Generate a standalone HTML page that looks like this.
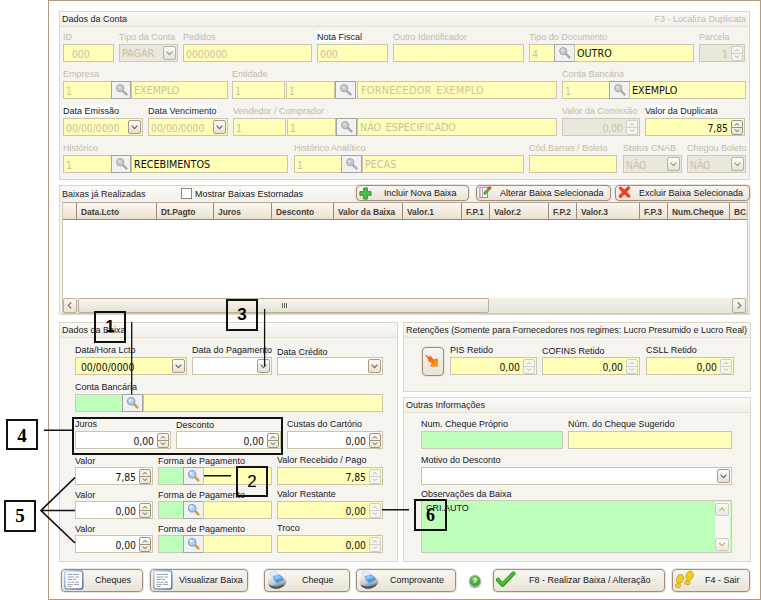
<!DOCTYPE html><html><head><meta charset="utf-8"><title>Baixa</title><style>
html,body{margin:0;padding:0}
body{width:761px;height:600px;position:relative;background:#fff;overflow:hidden;font:9px "Liberation Sans",sans-serif;color:#111}
div,span{position:absolute;box-sizing:border-box;white-space:nowrap}
.win{left:48px;top:0;width:713px;height:600px;border:1px solid #b49b80}
.gb{border:1px solid #ddd7c8;background:#f5f4ef}
.gt{left:0;top:0;right:0;height:15px;background:linear-gradient(#fbfaf8,#f1efe8);border-bottom:1px solid #e6e1d4}
.gt span{left:2px;top:2px;font-size:9px;color:#1a1a2a}
.l{font-size:9px;line-height:10px;color:#15151f}
.d{color:#c3bbab}
.hl{background:#fff;padding-top:1px;margin-top:-1px}
.in.x .cb{border-color:#b9b1a3}
.in{height:18px;border:1px solid #cdc4ad;background:#ffffb8;font:10.3px "DejaVu Sans Condensed","Liberation Sans",sans-serif;line-height:16px;color:#111;padding:1px 3px 0 2px;overflow:hidden}
.in.t{font-size:10.7px;word-spacing:1.5px}
.in.g{background:#bdffba;border-color:#d0c8b8}
.in.w{background:#fff}
.in.x{background:#ebe7dd;border-color:#cfc8b8}
.in.dt{color:#c9c1a6}
.in.r{text-align:right}
.sb{height:18px;border:1px solid #a5a5a5;background:#f1f1f1}
.sp{width:12px;height:15px;top:1px;right:1px;border:1px solid #a39482;background:linear-gradient(#f9f7f2,#ebe6da);border-radius:2px}
.sp.o{border-color:#d3cec3;background:#f6f5f1}
.cb{width:13px;height:14px;top:1px;right:1px;border:1px solid #a89a86;background:linear-gradient(#fdfcfa,#e6e0d2);border-radius:2px}
.btn{border:1px solid #a08d7c;border-radius:4px;background:linear-gradient(#f8f6f1,#e9e4d7);box-shadow:0 0 0 1px #e9e5dc}
.btn .t{font-size:9px;color:#15151f;line-height:10px}
.call{border:2px solid #111;text-align:center;font-weight:bold;color:#000}
.ln{background:#111}
.h{top:0;height:16px;border-right:1px solid #a08878;font:bold 8.4px "Liberation Sans",sans-serif;color:#443d33;line-height:18px;padding-left:4px}
</style></head><body>
<div class="win"></div>
<div class="gb" style="left:59px;top:11px;width:691px;height:169px"><div class="gt"><span>Dados da Conta</span><span style="left:auto;right:3px;color:#c3bbab">F3 - Localiza Duplicata</span></div></div>
<span class="l d" style="left:63px;top:32px">ID</span>
<div class="in dt" style="left:63px;top:44px;width:51px;height:18px">&nbsp;&nbsp;000</div>
<span class="l d" style="left:119px;top:32px">Tipo da Conta</span>
<div class="in x dt t" style="left:119px;top:44px;width:59px">PAGAR<div class="cb"><svg width="11" height="12" viewBox="0 0 11 12" style="position:absolute;left:0;top:0"><path d="M2.6 4.6 L5.5 7.6 L8.4 4.6" fill="none" stroke="#9a9184" stroke-width="1.1"/></svg></div></div>
<span class="l d" style="left:183px;top:32px">Pedidos</span>
<div class="in dt" style="left:183px;top:44px;width:129px;height:18px">0000000</div>
<span class="l hl" style="left:317px;top:32px">Nota Fiscal</span>
<div class="in dt" style="left:317px;top:44px;width:71px;height:18px">000</div>
<span class="l d" style="left:393px;top:32px">Outro Identificador</span>
<div class="in " style="left:393px;top:44px;width:131px;height:18px"></div>
<span class="l d" style="left:529px;top:32px">Tipo do Documento</span>
<div class="in dt" style="left:529px;top:44px;width:26px;height:18px">4</div>
<div class="sb" style="left:554px;top:44px;width:21px"><svg width="14" height="14" viewBox="0 0 14 14" style="position:absolute;left:3px;top:1px"><line x1="7.5" y1="7.5" x2="11.5" y2="11.5" stroke="#a9a9a9" stroke-width="2.4" stroke-linecap="round"/><circle cx="5.2" cy="5.2" r="3.6" fill="#c9c9c9" stroke="#a4a4a4" stroke-width="1"/><circle cx="4.3" cy="4.2" r="1.4" fill="#dedede"/></svg></div>
<div class="in  t" style="left:574px;top:44px;width:120px;height:18px">OUTRO</div>
<span class="l d" style="left:699px;top:32px">Parcela</span>
<div class="in r x dt" style="left:699px;top:44px;width:46px;padding-right:16px">1<div class="sp o"><svg width="10" height="13" viewBox="0 0 10 13" style="position:absolute;left:0;top:0"><path d="M3 4.4 L5 2.4 L7 4.4 M3 8.6 L5 10.6 L7 8.6" fill="none" stroke="#b5ad9f" stroke-width="1"/><line x1="0" y1="6.5" x2="10" y2="6.5" stroke="#d3cec3" stroke-width="1"/></svg></div></div>
<span class="l d" style="left:63px;top:69px">Empresa</span>
<div class="in dt" style="left:63px;top:81px;width:49px;height:18px">1</div>
<div class="sb" style="left:111px;top:81px;width:20px"><svg width="14" height="14" viewBox="0 0 14 14" style="position:absolute;left:3px;top:1px"><line x1="7.5" y1="7.5" x2="11.5" y2="11.5" stroke="#a9a9a9" stroke-width="2.4" stroke-linecap="round"/><circle cx="5.2" cy="5.2" r="3.6" fill="#c9c9c9" stroke="#a4a4a4" stroke-width="1"/><circle cx="4.3" cy="4.2" r="1.4" fill="#dedede"/></svg></div>
<div class="in dt t" style="left:131px;top:81px;width:97px;height:18px">EXEMPLO</div>
<span class="l d" style="left:232px;top:69px">Entidade</span>
<div class="in dt" style="left:232px;top:81px;width:53px;height:18px">1</div>
<div class="in dt" style="left:286px;top:81px;width:49px;height:18px">1</div>
<div class="sb" style="left:335px;top:81px;width:21px"><svg width="14" height="14" viewBox="0 0 14 14" style="position:absolute;left:3px;top:1px"><line x1="7.5" y1="7.5" x2="11.5" y2="11.5" stroke="#a9a9a9" stroke-width="2.4" stroke-linecap="round"/><circle cx="5.2" cy="5.2" r="3.6" fill="#c9c9c9" stroke="#a4a4a4" stroke-width="1"/><circle cx="4.3" cy="4.2" r="1.4" fill="#dedede"/></svg></div>
<div class="in dt t" style="left:357px;top:81px;width:200px;height:18px"><i style="font-style:normal;letter-spacing:.3px;padding-left:1px">FORNECEDOR EXEMPLO</i></div>
<span class="l d" style="left:562px;top:69px">Conta Bancária</span>
<div class="in dt" style="left:562px;top:81px;width:48px;height:18px">1</div>
<div class="sb" style="left:609px;top:81px;width:21px"><svg width="14" height="14" viewBox="0 0 14 14" style="position:absolute;left:3px;top:1px"><line x1="7.5" y1="7.5" x2="11.5" y2="11.5" stroke="#a9a9a9" stroke-width="2.4" stroke-linecap="round"/><circle cx="5.2" cy="5.2" r="3.6" fill="#c9c9c9" stroke="#a4a4a4" stroke-width="1"/><circle cx="4.3" cy="4.2" r="1.4" fill="#dedede"/></svg></div>
<div class="in  t" style="left:629px;top:81px;width:117px;height:18px">EXEMPLO</div>
<span class="l hl" style="left:63px;top:106px">Data Emissão</span>
<div class="in dt" style="left:63px;top:118px;width:80px">00/00/0000<div class="cb"><svg width="11" height="12" viewBox="0 0 11 12" style="position:absolute;left:0;top:0"><path d="M2.6 4.6 L5.5 7.6 L8.4 4.6" fill="none" stroke="#6b6256" stroke-width="1.1"/></svg></div></div>
<span class="l hl" style="left:148px;top:106px">Data Vencimento</span>
<div class="in dt" style="left:148px;top:118px;width:80px">00/00/0000<div class="cb"><svg width="11" height="12" viewBox="0 0 11 12" style="position:absolute;left:0;top:0"><path d="M2.6 4.6 L5.5 7.6 L8.4 4.6" fill="none" stroke="#6b6256" stroke-width="1.1"/></svg></div></div>
<span class="l d" style="left:233px;top:106px">Vendedor / Comprador</span>
<div class="in dt" style="left:233px;top:118px;width:53px;height:18px">1</div>
<div class="in dt" style="left:287px;top:118px;width:49px;height:18px">1</div>
<div class="sb" style="left:336px;top:118px;width:21px"><svg width="14" height="14" viewBox="0 0 14 14" style="position:absolute;left:3px;top:1px"><line x1="7.5" y1="7.5" x2="11.5" y2="11.5" stroke="#a9a9a9" stroke-width="2.4" stroke-linecap="round"/><circle cx="5.2" cy="5.2" r="3.6" fill="#c9c9c9" stroke="#a4a4a4" stroke-width="1"/><circle cx="4.3" cy="4.2" r="1.4" fill="#dedede"/></svg></div>
<div class="in dt t" style="left:357px;top:118px;width:200px;height:18px">NÃO ESPECIFICADO</div>
<span class="l d" style="left:562px;top:106px">Valor da Comissão</span>
<div class="in r x dt" style="left:562px;top:118px;width:78px;padding-right:16px">0,00<div class="sp o"><svg width="10" height="13" viewBox="0 0 10 13" style="position:absolute;left:0;top:0"><path d="M3 4.4 L5 2.4 L7 4.4 M3 8.6 L5 10.6 L7 8.6" fill="none" stroke="#b5ad9f" stroke-width="1"/><line x1="0" y1="6.5" x2="10" y2="6.5" stroke="#d3cec3" stroke-width="1"/></svg></div></div>
<span class="l hl" style="left:645px;top:106px">Valor da Duplicata</span>
<div class="in r " style="left:645px;top:118px;width:100px;padding-right:16px">7,85<div class="sp"><svg width="10" height="13" viewBox="0 0 10 13" style="position:absolute;left:0;top:0"><path d="M3 4.4 L5 2.4 L7 4.4 M3 8.6 L5 10.6 L7 8.6" fill="none" stroke="#5e5449" stroke-width="1"/><line x1="0" y1="6.5" x2="10" y2="6.5" stroke="#a39482" stroke-width="1"/></svg></div></div>
<span class="l d" style="left:63px;top:143px">Histórico</span>
<div class="in dt" style="left:63px;top:155px;width:49px;height:18px">1</div>
<div class="sb" style="left:111px;top:155px;width:20px"><svg width="14" height="14" viewBox="0 0 14 14" style="position:absolute;left:3px;top:1px"><line x1="7.5" y1="7.5" x2="11.5" y2="11.5" stroke="#a9a9a9" stroke-width="2.4" stroke-linecap="round"/><circle cx="5.2" cy="5.2" r="3.6" fill="#c9c9c9" stroke="#a4a4a4" stroke-width="1"/><circle cx="4.3" cy="4.2" r="1.4" fill="#dedede"/></svg></div>
<div class="in  t" style="left:131px;top:155px;width:157px;height:18px">RECEBIMENTOS</div>
<span class="l d" style="left:294px;top:143px">Histórico Analítico</span>
<div class="in dt" style="left:294px;top:155px;width:48px;height:18px">1</div>
<div class="sb" style="left:341px;top:155px;width:21px"><svg width="14" height="14" viewBox="0 0 14 14" style="position:absolute;left:3px;top:1px"><line x1="7.5" y1="7.5" x2="11.5" y2="11.5" stroke="#a9a9a9" stroke-width="2.4" stroke-linecap="round"/><circle cx="5.2" cy="5.2" r="3.6" fill="#c9c9c9" stroke="#a4a4a4" stroke-width="1"/><circle cx="4.3" cy="4.2" r="1.4" fill="#dedede"/></svg></div>
<div class="in dt t" style="left:362px;top:155px;width:162px;height:18px">PECAS</div>
<span class="l d" style="left:529px;top:143px">Cód.Barras / Boleto</span>
<div class="in " style="left:529px;top:155px;width:88px;height:18px"></div>
<span class="l d" style="left:623px;top:143px">Status CNAB</span>
<div class="in x dt" style="left:623px;top:155px;width:59px">NÃO<div class="cb"><svg width="11" height="12" viewBox="0 0 11 12" style="position:absolute;left:0;top:0"><path d="M2.6 4.6 L5.5 7.6 L8.4 4.6" fill="none" stroke="#9a9184" stroke-width="1.1"/></svg></div></div>
<span class="l d" style="left:687px;top:143px">Chegou Boleto</span>
<div class="in x dt" style="left:687px;top:155px;width:59px">NÃO<div class="cb"><svg width="11" height="12" viewBox="0 0 11 12" style="position:absolute;left:0;top:0"><path d="M2.6 4.6 L5.5 7.6 L8.4 4.6" fill="none" stroke="#9a9184" stroke-width="1.1"/></svg></div></div>
<div class="gb" style="left:59px;top:185px;width:691px;height:130px"><div class="gt" style="height:17px;border-bottom:none"><span style="top:3px">Baixas já Realizadas</span></div></div>
<div style="left:181px;top:188px;width:11px;height:11px;border:1px solid #8f8778;background:#fff"></div>
<span class="l " style="left:195px;top:189px">Mostrar Baixas Estornadas</span>
<div class="btn" style="left:356px;top:185px;width:113px;height:16px"><svg width="13" height="13" viewBox="0 0 14 14" style="position:absolute;left:2px;top:.5px"><path d="M5 1h4v4h4v4h-4v4h-4v-4h-4v-4h4z" fill="#4cc24a" stroke="#2a8a2a" stroke-width="1"/></svg><span class="t" style="left:27px;top:2px">Incluir Nova Baixa</span></div>
<div class="btn" style="left:476px;top:185px;width:135px;height:16px"><svg width="16" height="14" viewBox="477 186 16 14" style="position:absolute;left:0;top:0"><rect x="479.9" y="187.3" width="7.6" height="10.2" fill="#eef3ff" stroke="#8a8cc4" stroke-width="1"/><line x1="482.5" y1="187.8" x2="482.5" y2="197" stroke="#f08a78" stroke-width=".8"/><line x1="484.8" y1="193.2" x2="488.2" y2="189.8" stroke="#3db52e" stroke-width="3" stroke-linecap="round"/><circle cx="489.6" cy="188" r="1.8" fill="#e8432a"/></svg><span class="t" style="left:23px;top:2px">Alterar Baixa Selecionada</span></div>
<div class="btn" style="left:615px;top:185px;width:135px;height:16px"><svg width="16" height="14" viewBox="616 186 16 14" style="position:absolute;left:0;top:0"><path d="M620.6 188.2 L628.6 196 M628.4 188 L620.4 196.2" fill="none" stroke="#ee4322" stroke-width="3.4" stroke-linecap="round"/></svg><span class="t" style="left:23px;top:2px">Excluir Baixa Selecionada</span></div>
<div style="left:62px;top:202px;width:686px;height:112px;border:1px solid #cfc7b6;border-top-color:#b5a594;background:#fff;overflow:hidden">
<div style="left:0;top:0;width:684px;height:17px;background:linear-gradient(#faf7f1,#e9e0d0);border-bottom:1px solid #a08878"></div>
<div class="h" style="left:0px;width:14px"></div>
<div class="h" style="left:14px;width:80px">Data.Lcto</div>
<div class="h" style="left:94px;width:57px">Dt.Pagto</div>
<div class="h" style="left:151px;width:58px">Juros</div>
<div class="h" style="left:209px;width:62px">Desconto</div>
<div class="h" style="left:271px;width:69px">Valor da Baixa</div>
<div class="h" style="left:340px;width:59px">Valor.1</div>
<div class="h" style="left:399px;width:28px">F.P.1</div>
<div class="h" style="left:427px;width:59px">Valor.2</div>
<div class="h" style="left:486px;width:28px">F.P.2</div>
<div class="h" style="left:514px;width:63px">Valor.3</div>
<div class="h" style="left:577px;width:28px">F.P.3</div>
<div class="h" style="left:605px;width:62px">Num.Cheque</div>
<div class="h" style="left:667px;width:31px">BC.</div>
<div style="left:0;top:95px;width:684px;height:15px;background:linear-gradient(#f3f0ea,#e9e5dc)"></div>
<div style="left:0;top:95px;width:14px;height:15px;border:1px solid #b9ad9c;border-radius:2px;background:linear-gradient(#faf8f4,#e8e2d6)"><svg width="12" height="13" style="position:absolute;left:0;top:0"><path d="M7.2 3.5 L4.2 6.5 L7.2 9.5" fill="none" stroke="#7d7264" stroke-width="1.1"/></svg></div>
<div style="left:669px;top:95px;width:14px;height:15px;border:1px solid #b9ad9c;border-radius:2px;background:linear-gradient(#faf8f4,#e8e2d6)"><svg width="12" height="13" style="position:absolute;left:0;top:0"><path d="M4.8 3.5 L7.8 6.5 L4.8 9.5" fill="none" stroke="#7d7264" stroke-width="1.1"/></svg></div>
<div style="left:15px;top:95px;width:411px;height:15px;border:1px solid #b9ad9c;border-radius:2px;background:linear-gradient(#f9f7f2,#e6e0d3)"><div style="left:203px;top:4px;width:1px;height:5px;background:#6a6054"></div><div style="left:205px;top:4px;width:1px;height:5px;background:#6a6054"></div><div style="left:207px;top:4px;width:1px;height:5px;background:#6a6054"></div></div>
</div>
<div class="gb" style="left:59px;top:322px;width:339px;height:240px"><div class="gt"><span>Dados da Baixa</span></div></div>
<span class="l " style="left:75px;top:345px">Data/Hora Lcto</span>
<div class="in " style="left:75px;top:357px;width:112px">&nbsp;00/00/0000<div class="cb"><svg width="11" height="12" viewBox="0 0 11 12" style="position:absolute;left:0;top:0"><path d="M2.6 4.6 L5.5 7.6 L8.4 4.6" fill="none" stroke="#6b6256" stroke-width="1.1"/></svg></div></div>
<span class="l " style="left:192px;top:345px">Data do Pagamento</span>
<div class="in w" style="left:192px;top:357px;width:80px"><div class="cb"><svg width="11" height="12" viewBox="0 0 11 12" style="position:absolute;left:0;top:0"><path d="M2.6 4.6 L5.5 7.6 L8.4 4.6" fill="none" stroke="#6b6256" stroke-width="1.1"/></svg></div></div>
<span class="l " style="left:277px;top:347px">Data Crédito</span>
<div class="in w" style="left:277px;top:357px;width:106px"><div class="cb"><svg width="11" height="12" viewBox="0 0 11 12" style="position:absolute;left:0;top:0"><path d="M2.6 4.6 L5.5 7.6 L8.4 4.6" fill="none" stroke="#6b6256" stroke-width="1.1"/></svg></div></div>
<span class="l " style="left:75px;top:382px">Conta Bancária</span>
<div class="in g" style="left:75px;top:394px;width:48px;height:18px"></div>
<div class="sb" style="left:122px;top:394px;width:21px"><svg width="14" height="14" viewBox="0 0 14 14" style="position:absolute;left:3px;top:1px"><line x1="7.5" y1="7.5" x2="11.3" y2="11.3" stroke="#e49a2c" stroke-width="2.6" stroke-linecap="round"/><circle cx="5.2" cy="5.2" r="3.7" fill="#a9d3f3" stroke="#7f9fc0" stroke-width="1.1"/><circle cx="4.2" cy="4.1" r="1.5" fill="#e3f2fd"/></svg></div>
<div class="in " style="left:143px;top:394px;width:240px;height:18px"></div>
<span class="l " style="left:75px;top:419px">Juros</span>
<div class="in r w" style="left:75px;top:431px;width:96px;padding-right:16px">0,00<div class="sp"><svg width="10" height="13" viewBox="0 0 10 13" style="position:absolute;left:0;top:0"><path d="M3 4.4 L5 2.4 L7 4.4 M3 8.6 L5 10.6 L7 8.6" fill="none" stroke="#5e5449" stroke-width="1"/><line x1="0" y1="6.5" x2="10" y2="6.5" stroke="#a39482" stroke-width="1"/></svg></div></div>
<span class="l " style="left:176px;top:420px">Desconto</span>
<div class="in r w" style="left:176px;top:431px;width:105px;padding-right:16px">0,00<div class="sp"><svg width="10" height="13" viewBox="0 0 10 13" style="position:absolute;left:0;top:0"><path d="M3 4.4 L5 2.4 L7 4.4 M3 8.6 L5 10.6 L7 8.6" fill="none" stroke="#5e5449" stroke-width="1"/><line x1="0" y1="6.5" x2="10" y2="6.5" stroke="#a39482" stroke-width="1"/></svg></div></div>
<span class="l " style="left:287px;top:419px">Custas do Cartório</span>
<div class="in r w" style="left:287px;top:431px;width:96px;padding-right:16px">0,00<div class="sp"><svg width="10" height="13" viewBox="0 0 10 13" style="position:absolute;left:0;top:0"><path d="M3 4.4 L5 2.4 L7 4.4 M3 8.6 L5 10.6 L7 8.6" fill="none" stroke="#5e5449" stroke-width="1"/><line x1="0" y1="6.5" x2="10" y2="6.5" stroke="#a39482" stroke-width="1"/></svg></div></div>
<span class="l " style="left:75px;top:456px">Valor</span>
<div class="in r w" style="left:75px;top:467px;width:78px;padding-right:16px">7,85<div class="sp"><svg width="10" height="13" viewBox="0 0 10 13" style="position:absolute;left:0;top:0"><path d="M3 4.4 L5 2.4 L7 4.4 M3 8.6 L5 10.6 L7 8.6" fill="none" stroke="#5e5449" stroke-width="1"/><line x1="0" y1="6.5" x2="10" y2="6.5" stroke="#a39482" stroke-width="1"/></svg></div></div>
<span class="l " style="left:158px;top:456px">Forma de Pagamento</span>
<div class="in g" style="left:158px;top:467px;width:26px;height:18px"></div>
<div class="sb" style="left:183px;top:467px;width:21px"><svg width="14" height="14" viewBox="0 0 14 14" style="position:absolute;left:3px;top:1px"><line x1="7.5" y1="7.5" x2="11.3" y2="11.3" stroke="#e49a2c" stroke-width="2.6" stroke-linecap="round"/><circle cx="5.2" cy="5.2" r="3.7" fill="#a9d3f3" stroke="#7f9fc0" stroke-width="1.1"/><circle cx="4.2" cy="4.1" r="1.5" fill="#e3f2fd"/></svg></div>
<div class="in " style="left:203px;top:467px;width:69px;height:18px"></div>
<span class="l " style="left:277px;top:455px">Valor Recebido / Pago</span>
<div class="in r " style="left:277px;top:467px;width:106px;padding-right:16px">7,85<div class="sp o"><svg width="10" height="13" viewBox="0 0 10 13" style="position:absolute;left:0;top:0"><path d="M3 4.4 L5 2.4 L7 4.4 M3 8.6 L5 10.6 L7 8.6" fill="none" stroke="#b9b4aa" stroke-width="1"/><line x1="0" y1="6.5" x2="10" y2="6.5" stroke="#d3cec3" stroke-width="1"/></svg></div></div>
<span class="l " style="left:75px;top:490px">Valor</span>
<div class="in r w" style="left:75px;top:501px;width:78px;padding-right:16px">0,00<div class="sp"><svg width="10" height="13" viewBox="0 0 10 13" style="position:absolute;left:0;top:0"><path d="M3 4.4 L5 2.4 L7 4.4 M3 8.6 L5 10.6 L7 8.6" fill="none" stroke="#5e5449" stroke-width="1"/><line x1="0" y1="6.5" x2="10" y2="6.5" stroke="#a39482" stroke-width="1"/></svg></div></div>
<span class="l " style="left:158px;top:490px">Forma de Pagamento</span>
<div class="in g" style="left:158px;top:501px;width:26px;height:18px"></div>
<div class="sb" style="left:183px;top:501px;width:21px"><svg width="14" height="14" viewBox="0 0 14 14" style="position:absolute;left:3px;top:1px"><line x1="7.5" y1="7.5" x2="11.3" y2="11.3" stroke="#e49a2c" stroke-width="2.6" stroke-linecap="round"/><circle cx="5.2" cy="5.2" r="3.7" fill="#a9d3f3" stroke="#7f9fc0" stroke-width="1.1"/><circle cx="4.2" cy="4.1" r="1.5" fill="#e3f2fd"/></svg></div>
<div class="in " style="left:203px;top:501px;width:69px;height:18px"></div>
<span class="l " style="left:277px;top:489px">Valor Restante</span>
<div class="in r " style="left:277px;top:501px;width:106px;padding-right:16px">0,00<div class="sp o"><svg width="10" height="13" viewBox="0 0 10 13" style="position:absolute;left:0;top:0"><path d="M3 4.4 L5 2.4 L7 4.4 M3 8.6 L5 10.6 L7 8.6" fill="none" stroke="#b9b4aa" stroke-width="1"/><line x1="0" y1="6.5" x2="10" y2="6.5" stroke="#d3cec3" stroke-width="1"/></svg></div></div>
<span class="l " style="left:75px;top:524px">Valor</span>
<div class="in r w" style="left:75px;top:535px;width:78px;padding-right:16px">0,00<div class="sp"><svg width="10" height="13" viewBox="0 0 10 13" style="position:absolute;left:0;top:0"><path d="M3 4.4 L5 2.4 L7 4.4 M3 8.6 L5 10.6 L7 8.6" fill="none" stroke="#5e5449" stroke-width="1"/><line x1="0" y1="6.5" x2="10" y2="6.5" stroke="#a39482" stroke-width="1"/></svg></div></div>
<span class="l " style="left:158px;top:524px">Forma de Pagamento</span>
<div class="in g" style="left:158px;top:535px;width:26px;height:18px"></div>
<div class="sb" style="left:183px;top:535px;width:21px"><svg width="14" height="14" viewBox="0 0 14 14" style="position:absolute;left:3px;top:1px"><line x1="7.5" y1="7.5" x2="11.3" y2="11.3" stroke="#e49a2c" stroke-width="2.6" stroke-linecap="round"/><circle cx="5.2" cy="5.2" r="3.7" fill="#a9d3f3" stroke="#7f9fc0" stroke-width="1.1"/><circle cx="4.2" cy="4.1" r="1.5" fill="#e3f2fd"/></svg></div>
<div class="in " style="left:203px;top:535px;width:69px;height:18px"></div>
<span class="l " style="left:277px;top:523px">Troco</span>
<div class="in r " style="left:277px;top:535px;width:106px;padding-right:16px">0,00<div class="sp o"><svg width="10" height="13" viewBox="0 0 10 13" style="position:absolute;left:0;top:0"><path d="M3 4.4 L5 2.4 L7 4.4 M3 8.6 L5 10.6 L7 8.6" fill="none" stroke="#b9b4aa" stroke-width="1"/><line x1="0" y1="6.5" x2="10" y2="6.5" stroke="#d3cec3" stroke-width="1"/></svg></div></div>
<div class="gb" style="left:403px;top:322px;width:348px;height:70px"><div class="gt"><span><i style="font-style:normal;letter-spacing:-.04px">Retenções (Somente para Fornecedores nos regimes: Lucro Presumido e Lucro Real)</i></span></div></div>
<div class="btn" style="left:422px;top:347px;width:22px;height:29px"><svg width="20" height="27" viewBox="423 348 20 27" style="position:absolute;left:0;top:0"><defs><linearGradient id="fl" x1="0" y1="0" x2="1" y2="1"><stop offset="0" stop-color="#ee3a1a"/><stop offset=".55" stop-color="#fb7a14"/><stop offset="1" stop-color="#ffb312"/></linearGradient></defs><path d="M425.2 354.8 L429.6 357.4 L430 355.8 L433.6 359.6 L437.6 358.8 L437.8 366.4 L430.4 366.2 L432.2 362.8 L428.6 361.4 L428.2 358.8 Z" fill="url(#fl)" stroke="#e0601a" stroke-width=".4"/></svg></div>
<span class="l " style="left:450px;top:345px">PIS Retido</span>
<div class="in r " style="left:450px;top:357px;width:87px;padding-right:16px">0,00<div class="sp o"><svg width="10" height="13" viewBox="0 0 10 13" style="position:absolute;left:0;top:0"><path d="M3 4.4 L5 2.4 L7 4.4 M3 8.6 L5 10.6 L7 8.6" fill="none" stroke="#b9b4aa" stroke-width="1"/><line x1="0" y1="6.5" x2="10" y2="6.5" stroke="#d3cec3" stroke-width="1"/></svg></div></div>
<span class="l " style="left:542px;top:346px">COFINS Retido</span>
<div class="in r " style="left:542px;top:357px;width:98px;padding-right:16px">0,00<div class="sp o"><svg width="10" height="13" viewBox="0 0 10 13" style="position:absolute;left:0;top:0"><path d="M3 4.4 L5 2.4 L7 4.4 M3 8.6 L5 10.6 L7 8.6" fill="none" stroke="#b9b4aa" stroke-width="1"/><line x1="0" y1="6.5" x2="10" y2="6.5" stroke="#d3cec3" stroke-width="1"/></svg></div></div>
<span class="l " style="left:646px;top:345px">CSLL Retido</span>
<div class="in r " style="left:646px;top:357px;width:88px;padding-right:16px">0,00<div class="sp o"><svg width="10" height="13" viewBox="0 0 10 13" style="position:absolute;left:0;top:0"><path d="M3 4.4 L5 2.4 L7 4.4 M3 8.6 L5 10.6 L7 8.6" fill="none" stroke="#b9b4aa" stroke-width="1"/><line x1="0" y1="6.5" x2="10" y2="6.5" stroke="#d3cec3" stroke-width="1"/></svg></div></div>
<div class="gb" style="left:403px;top:397px;width:348px;height:165px"><div class="gt"><span>Outras Informações</span></div></div>
<span class="l " style="left:421px;top:419px">Num. Cheque Próprio</span>
<div class="in g" style="left:421px;top:431px;width:142px;height:18px"></div>
<span class="l " style="left:568px;top:419px">Núm. do Cheque Sugerido</span>
<div class="in " style="left:568px;top:431px;width:164px;height:18px"></div>
<span class="l " style="left:421px;top:455px">Motivo do Desconto</span>
<div class="in w" style="left:421px;top:467px;width:311px"><div class="cb"><svg width="11" height="12" viewBox="0 0 11 12" style="position:absolute;left:0;top:0"><path d="M2.6 4.6 L5.5 7.6 L8.4 4.6" fill="none" stroke="#6b6256" stroke-width="1.1"/></svg></div></div>
<span class="l " style="left:421px;top:489px">Observações da Baixa</span>
<div class="in g" style="left:421px;top:500px;width:311px;height:53px;font-size:9px;line-height:11px;padding:2px 4px;font-family:'Liberation Sans',sans-serif">CRI.AUTO<div style="right:1px;top:1px;width:15px;height:49px;background:#f8f7f3"></div><div style="right:2px;top:2px;width:14px;height:13px;border:1px solid #d3cbbb;border-radius:2px;background:linear-gradient(#fcfbf8,#ece7dc)"><svg width="12" height="11" style="position:absolute;left:0;top:0"><path d="M3.2 6.8 L6 4 L8.8 6.8" fill="none" stroke="#b3ab9d" stroke-width="1.1"/></svg></div><div style="right:2px;bottom:1px;width:14px;height:13px;border:1px solid #d3cbbb;border-radius:2px;background:linear-gradient(#fcfbf8,#ece7dc)"><svg width="12" height="11" style="position:absolute;left:0;top:0"><path d="M3.2 4 L6 6.8 L8.8 4" fill="none" stroke="#b3ab9d" stroke-width="1.1"/></svg></div></div>
<div class="btn" style="left:61px;top:569px;width:82px;height:23px"><svg width="20" height="20" viewBox="0 0 20 20" style="position:absolute;left:2px;top:0px"><defs><linearGradient id="dg" x1="0" y1="0" x2="1" y2="1"><stop offset="0" stop-color="#b9d5fc"/><stop offset="1" stop-color="#5a69a8"/></linearGradient></defs><rect x=".8" y=".8" width="18" height="18.2" rx="2.6" fill="#fdfeff" stroke="url(#dg)" stroke-width="1.5"/><path d="M3.5 4.4h5M9 4.4h6M3.5 7h7M11.5 7h3.5M3.5 9.4h4.5M9 9.4h3M3.5 12.2h3M7.5 12.2h3M11.5 12.2h3.5M3.5 14.4h5.5M10 14.4h5M3.5 16.4h4" stroke="#70707c" stroke-width=".7"/></svg><span class="t" style="left:33px;top:5px">Cheques</span></div>
<div class="btn" style="left:150px;top:569px;width:98px;height:23px"><svg width="20" height="20" viewBox="0 0 20 20" style="position:absolute;left:2px;top:0px"><defs><linearGradient id="dg" x1="0" y1="0" x2="1" y2="1"><stop offset="0" stop-color="#b9d5fc"/><stop offset="1" stop-color="#5a69a8"/></linearGradient></defs><rect x=".8" y=".8" width="18" height="18.2" rx="2.6" fill="#fdfeff" stroke="url(#dg)" stroke-width="1.5"/><path d="M3.5 4.4h5M9 4.4h6M3.5 7h7M11.5 7h3.5M3.5 9.4h4.5M9 9.4h3M3.5 12.2h3M7.5 12.2h3M11.5 12.2h3.5M3.5 14.4h5.5M10 14.4h5M3.5 16.4h4" stroke="#70707c" stroke-width=".7"/></svg><span class="t" style="left:28px;top:5px">Visualizar Baixa</span></div>
<div class="btn" style="left:264px;top:569px;width:86px;height:23px"><svg width="20" height="19" viewBox="0 0 20 19" style="position:absolute;left:2px;top:1px"><defs><linearGradient id="pg" x1="0.2" y1="0" x2="0.6" y2="1"><stop offset="0" stop-color="#f4f4f7"/><stop offset=".55" stop-color="#c6c6ce"/><stop offset="1" stop-color="#5c5c66"/></linearGradient></defs><path d="M1 9.5 Q0.5 5.5 4 5 L12 4.5 Q18 6 19.3 10 Q19.6 13 16 15.5 Q12 18.6 7 17.6 Q1.5 16.2 1 12.5 Z" fill="url(#pg)"/><path d="M5.8 5 L11.5 3.2 Q16.5 5.5 17.2 9 L10.2 12.4 Q6.5 10 5.8 5Z" fill="#4f9fe6"/><path d="M6.5 5.4 L11.3 3.9 Q14 5 15 6.6 L8 8.6Z" fill="#8cc4f4"/><path d="M2.8 1 L9.5 0.4 L11.2 4 L4.2 5.2Z" fill="#e2efff" stroke="#a9c4e8" stroke-width=".5"/><path d="M1.6 13.4 Q8 17.8 17.6 13.2 L16.5 15.2 Q11 18.8 6.5 17.4 Q2.4 16.2 1.6 13.4Z" fill="#55555f"/><circle cx="16" cy="9" r=".7" fill="#f2a020"/></svg><span class="t" style="left:37px;top:5px">Cheque</span></div>
<div class="btn" style="left:356px;top:569px;width:100px;height:23px"><svg width="20" height="19" viewBox="0 0 20 19" style="position:absolute;left:2px;top:1px"><defs><linearGradient id="pg" x1="0.2" y1="0" x2="0.6" y2="1"><stop offset="0" stop-color="#f4f4f7"/><stop offset=".55" stop-color="#c6c6ce"/><stop offset="1" stop-color="#5c5c66"/></linearGradient></defs><path d="M1 9.5 Q0.5 5.5 4 5 L12 4.5 Q18 6 19.3 10 Q19.6 13 16 15.5 Q12 18.6 7 17.6 Q1.5 16.2 1 12.5 Z" fill="url(#pg)"/><path d="M5.8 5 L11.5 3.2 Q16.5 5.5 17.2 9 L10.2 12.4 Q6.5 10 5.8 5Z" fill="#4f9fe6"/><path d="M6.5 5.4 L11.3 3.9 Q14 5 15 6.6 L8 8.6Z" fill="#8cc4f4"/><path d="M2.8 1 L9.5 0.4 L11.2 4 L4.2 5.2Z" fill="#e2efff" stroke="#a9c4e8" stroke-width=".5"/><path d="M1.6 13.4 Q8 17.8 17.6 13.2 L16.5 15.2 Q11 18.8 6.5 17.4 Q2.4 16.2 1.6 13.4Z" fill="#55555f"/><circle cx="16" cy="9" r=".7" fill="#f2a020"/></svg><span class="t" style="left:33px;top:5px">Comprovante</span></div>
<div style="left:469px;top:575px;width:12px;height:12px;border-radius:6px;background:radial-gradient(circle at 45% 35%,#7fdc66,#2c9a22 75%);border:1px solid #a4a4a4;box-shadow:0 1px 1px #8a8a8a;color:#fff;font:bold 8px 'Liberation Sans',sans-serif;line-height:10px;text-align:center">?</div>
<div class="btn" style="left:493px;top:569px;width:172px;height:23px"><svg width="24" height="20" viewBox="494 570 24 20" style="position:absolute;left:0;top:0"><path d="M498 579.8 L502.6 584.8 L513.4 573.4" fill="none" stroke="#2a9a1c" stroke-width="4.2" stroke-linecap="round" stroke-linejoin="round"/><path d="M498 579.5 L502.6 584.3 L513.3 573.2" fill="none" stroke="#4cc23a" stroke-width="2.2" stroke-linecap="round" stroke-linejoin="round"/></svg><span class="t" style="left:35px;top:5px">F8 - Realizar Baixa / Alteração</span></div>
<div class="btn" style="left:672px;top:569px;width:78px;height:23px"><svg width="24" height="20" viewBox="673 570 24 20" style="position:absolute;left:0;top:0"><g fill="#f3cb1a" stroke="#bf9a0c" stroke-width=".7"><ellipse cx="680" cy="578.8" rx="3.3" ry="4.5" transform="rotate(20 680 578.8)"/><ellipse cx="678" cy="585.6" rx="2.6" ry="2.1" transform="rotate(15 678 585.6)"/><ellipse cx="689.6" cy="575.8" rx="3.5" ry="4.8" transform="rotate(20 689.6 575.8)"/><ellipse cx="687.3" cy="582.7" rx="2.7" ry="2.1" transform="rotate(15 687.3 582.7)"/></g></svg><span class="t" style="left:32px;top:5px">F4 - Sair</span></div>
<div class="call" style="left:94px;top:311px;width:32px;height:32px;font:bold 17px 'Liberation Sans',sans-serif;line-height:28px">1</div>
<div class="call" style="left:226px;top:299px;width:32px;height:32px;font:bold 17px 'Liberation Sans',sans-serif;line-height:28px">3</div>
<div class="call" style="left:236px;top:466px;width:32px;height:31px;font:normal 17px 'Liberation Sans',sans-serif;line-height:27px">2</div>
<div class="call" style="left:6px;top:419px;width:32px;height:31px;font:bold 19px 'Liberation Serif',serif;line-height:30px">4</div>
<div class="call" style="left:4px;top:500px;width:32px;height:32px;font:bold 19px 'Liberation Serif',serif;line-height:28px">5</div>
<div class="call" style="left:414px;top:499px;width:33px;height:32px;font:bold 18px 'Liberation Serif',serif;line-height:28px">6</div>
<div style="left:72px;top:417px;width:211px;height:38px;border:2px solid #111"></div>
<svg width="761" height="600" style="position:absolute;left:0;top:0;pointer-events:none"><path d="M75 477.5 L41 510.5 L75 543 M41 510.5 L75 510.5" fill="none" stroke="#111" stroke-width="1.7"/><path d="M44 430.2H72.5M382 509.7H409M204 475.7H231" stroke="#111" stroke-width="1.5"/><path d="M131.7 322V394.5M264.6 309V366" stroke="#111" stroke-width="1.3"/></svg>
</body></html>
